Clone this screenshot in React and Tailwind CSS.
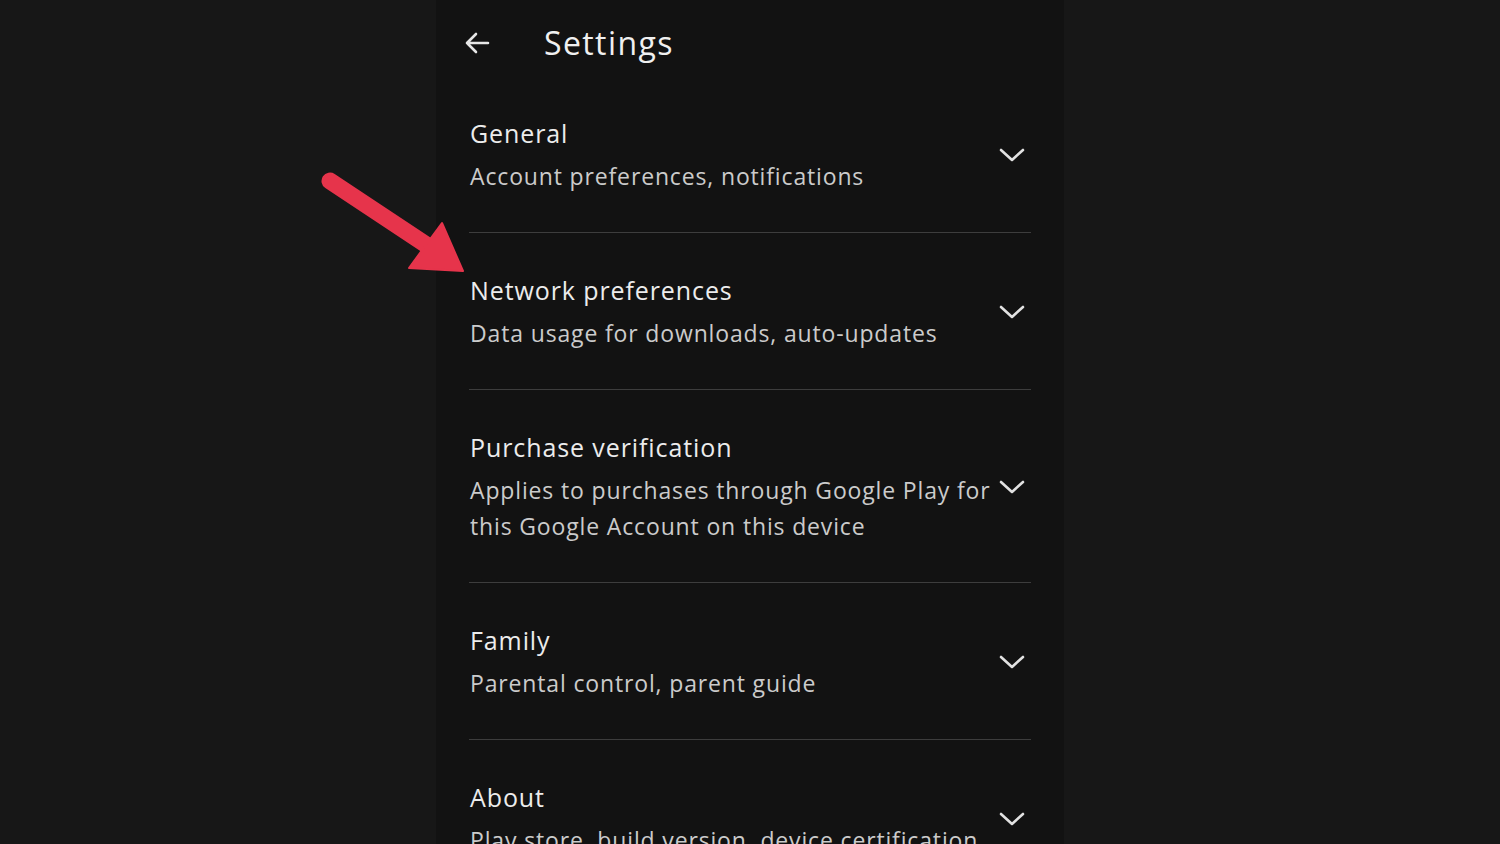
import React from 'react';

const sections = [
    { title: 'General', subtitle: ['Account preferences, notifications'] },
    { title: 'Network preferences', subtitle: ['Data usage for downloads, auto-updates'] },
    { title: 'Purchase verification', subtitle: ['Applies to purchases through Google Play for', 'this Google Account on this device'] },
    { title: 'Family', subtitle: ['Parental control, parent guide'] },
    { title: 'About', subtitle: ['Play store, build version, device certification'] },
];

const Chevron = () => (
    <svg width="26" height="16" viewBox="0 0 26 16" fill="none" className="shrink-0">
        <path d="M2 3 L13 13 L24 3" stroke="#e2e2e2" strokeWidth="2.6" strokeLinecap="round" strokeLinejoin="round" />
    </svg>
);

const BackArrow = () => (
    <svg width="28" height="28" viewBox="0 0 28 28" fill="none">
        <path d="M25 14 H4 M13 5 L4 14 L13 23" stroke="#e6e6e6" strokeWidth="2.6" strokeLinecap="round" strokeLinejoin="round" />
    </svg>
);

const Section = ({ item, first }) => (
    <div className={first ? '' : 'border-t border-[#3d3d3d]'}>
        <div className={`flex items-center justify-between ${first ? 'pt-[30px]' : 'pt-[40px]'} pb-[38px]`}>
            <div className="pl-[1px]">
                <p className="text-[25px] leading-[34px] tracking-[0.9px] text-[#ececec]">{item.title}</p>
                <div className="mt-[8px] text-[23px] leading-[36px] tracking-[0.85px] text-[#cbcbcb]">
                    {item.subtitle.map((line) => (
                        <p key={line} className="whitespace-nowrap">{line}</p>
                    ))}
                </div>
            </div>
            <div className="mr-[6px]">
                <Chevron />
            </div>
        </div>
    </div>
);

const App = () => {
    return (
        <div className="relative h-[844px] w-full overflow-hidden bg-[#171717]" style={{ fontFamily: '"Open Sans", "Liberation Sans", sans-serif' }}>
            <div className="mx-auto h-full w-[628px] bg-[#121212] pl-[33px] pr-[33px]">
                {/* Top bar */}
                <div className="flex h-[86px] items-center">
                    <div className="ml-[-6px]">
                        <BackArrow />
                    </div>
                    <h1 className="ml-[53px] text-[32px] tracking-[1.4px] text-[#f0f0f0]">Settings</h1>
                </div>

                {sections.map((item, i) => (
                    <Section key={item.title} item={item} first={i === 0} />
                ))}
            </div>

            {/* Red pointer arrow */}
            <svg className="absolute left-[300px] top-[150px]" width="180" height="130" viewBox="300 150 180 130">
                <line x1="330" y1="181" x2="428" y2="246" stroke="#e6344b" strokeWidth="17" strokeLinecap="round" />
                <polygon points="442,223 463,271 409,268" fill="#e6344b" stroke="#e6344b" strokeWidth="2" strokeLinejoin="round" />
            </svg>
        </div>
    );
};

export default App;
